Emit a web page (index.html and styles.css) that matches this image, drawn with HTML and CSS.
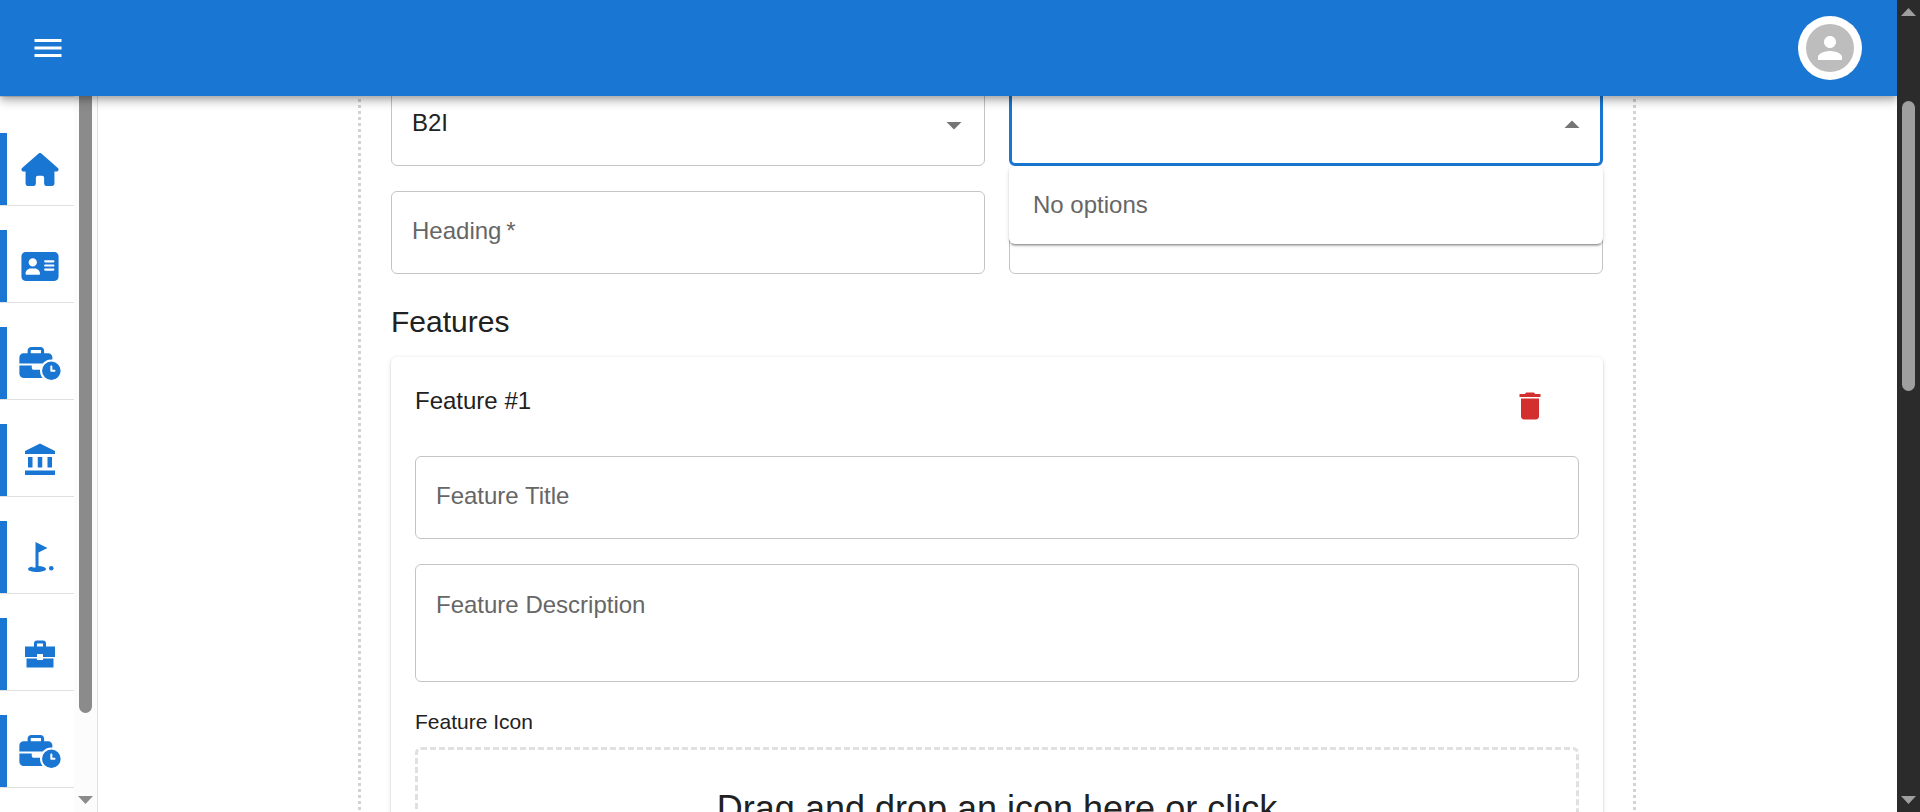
FILE: index.html
```html
<!DOCTYPE html>
<html lang="en">
<head>
<meta charset="utf-8">
<title>Features form</title>
<link rel="stylesheet" href="styles.css">
</head>
<body>
<svg class="defs" aria-hidden="true">
  <symbol id="briefcase-clock" viewBox="0 0 640 512"><path d="M184 48l144 0c4.400 0 8 3.600 8 8l0 40L176 96l0-40c0-4.400 3.600-8 8-8zm-56 8l0 40L64 96C28.700 96 0 124.700 0 160l0 96 192 0 160 0 8.200 0c32.300-39.100 81.100-64 135.800-64c5.400 0 10.700 .2 16 .7l0-32.700c0-35.300-28.700-64-64-64l-64 0 0-40c0-30.900-25.100-56-56-56L184 0c-30.900 0-56 25.100-56 56zM320 352l-96 0c-17.700 0-32-14.300-32-32l0-32L0 288 0 416c0 35.300 28.700 64 64 64l296.200 0C335.100 449.600 320 410.500 320 368c0-5.400 .2-10.700 .7-16l-.7 0zm320 16a144 144 0 1 0 -288 0 144 144 0 1 0 288 0zM496 288c8.800 0 16 7.200 16 16l0 48 32 0c8.800 0 16 7.200 16 16s-7.200 16-16 16l-48 0c-8.800 0-16-7.200-16-16l0-64c0-8.800 7.200-16 16-16z"/></symbol>
</svg>
<div class="window">
  <div class="page">
    <header class="appbar">
      <button class="icon-button" type="button" aria-label="Open menu">
        <svg class="icon" viewBox="0 0 24 24"><path d="M3 18h18v-2H3v2zm0-5h18v-2H3v2zm0-7v2h18V6H3z"/></svg>
      </button>
      <button class="account" type="button" aria-label="Account">
        <span class="avatar"><svg class="icon" viewBox="0 0 24 24"><path d="M12 12c2.210 0 4-1.790 4-4s-1.790-4-4-4-4 1.790-4 4 1.790 4 4 4zm0 2c-2.670 0-8 1.340-8 4v2h16v-2c0-2.660-5.330-4-8-4z"/></svg></span>
      </button>
    </header>
    <div class="body">
      <aside class="sidebar">
        <nav class="nav">
          <a class="nav-item" href="#" aria-label="Home"><svg class="nav-icon medium" viewBox="0 0 576 512"><path d="M575.800 255.500c0 18-15 32.100-32 32.100l-32 0 .7 160.200c0 2.700-.2 5.400-.5 8.100l0 16.200c0 22.100-17.900 40-40 40l-16 0c-1.100 0-2.200 0-3.300-.1c-1.400 .1-2.800 .1-4.200 .1L416 512l-24 0c-22.100 0-40-17.900-40-40l0-24 0-64c0-17.700-14.300-32-32-32l-64 0c-17.700 0-32 14.300-32 32l0 64 0 24c0 22.100-17.900 40-40 40l-24 0-31.900 0c-1.500 0-3-.1-4.500-.2c-1.200 .1-2.400 .2-3.600 .2l-16 0c-22.100 0-40-17.900-40-40l0-112c0-.9 0-1.900 .1-2.800l0-69.700-32 0c-18 0-32-14-32-32.100c0-9 3-17 10-24L266.400 8c7-7 15-8 22-8s15 2 21 7L564.800 231.500c8 7 12 15 11 24z"/></svg></a>
          <a class="nav-item" href="#" aria-label="Profile"><svg class="nav-icon medium" viewBox="0 0 576 512"><path d="M64 32C28.700 32 0 60.700 0 96L0 416c0 35.300 28.700 64 64 64l448 0c35.300 0 64-28.700 64-64l0-320c0-35.300-28.700-64-64-64L64 32zm80 256l64 0c44.200 0 80 35.800 80 80c0 8.800-7.200 16-16 16L80 384c-8.800 0-16-7.200-16-16c0-44.200 35.800-80 80-80zm-32-96a64 64 0 1 1 128 0 64 64 0 1 1 -128 0zm256-32l128 0c8.800 0 16 7.200 16 16s-7.200 16-16 16l-128 0c-8.800 0-16-7.200-16-16s7.200-16 16-16zm0 64l128 0c8.800 0 16 7.200 16 16s-7.200 16-16 16l-128 0c-8.800 0-16-7.200-16-16s7.200-16 16-16zm0 64l128 0c8.800 0 16 7.200 16 16s-7.200 16-16 16l-128 0c-8.800 0-16-7.200-16-16s7.200-16 16-16z"/></svg></a>
          <a class="nav-item" href="#" aria-label="Work history"><svg class="nav-icon wide"><use href="#briefcase-clock"/></svg></a>
          <a class="nav-item" href="#" aria-label="Bank"><svg class="icon" viewBox="0 0 24 24"><path d="M4 10h3v7H4zM10.500 10h3v7h-3zM2 19h20v3H2zM17 10h3v7h-3zM12 1L2 6v2h20V6z"/></svg></a>
          <a class="nav-item" href="#" aria-label="Golf course"><svg class="icon" viewBox="0 0 24 24"><circle cx="19.500" cy="19.500" r="1.500"/><path d="M17 5.920L9 2v17H7v-.73c-1.790.35-3 .99-3 1.730 0 1.100 2.690 2 6 2s6-.9 6-2c0-.99-2.160-1.810-5-1.970V8.980l6-3.060z"/></svg></a>
          <a class="nav-item" href="#" aria-label="Business"><svg class="icon" viewBox="0 0 24 24"><path fill-rule="evenodd" d="M8 7V5a2 2 0 0 1 2-2h4a2 2 0 0 1 2 2v2h6v7h-8v-2h-4v2H2V7zM10 5v2h4V5zM3 15h7v1h4v-1h7v6H3z"/></svg></a>
          <a class="nav-item" href="#" aria-label="Work schedule"><svg class="nav-icon wide"><use href="#briefcase-clock"/></svg></a>
        </nav>
        <div class="scrollbar side-scroll" aria-hidden="true">
          <span class="thumb"></span>
          <svg class="scroll-arrow" viewBox="0 0 15 8"><path d="M0 0h15L7.500 8z"/></svg>
        </div>
      </aside>
      <main class="content">
        <form class="panel">
          <div class="grid">
            <div class="field select-field">
              <input class="input" type="text" value="B2I" aria-label="Business type">
              <svg class="icon arrow" viewBox="0 0 24 24"><path d="M7 10l5 5 5-5z"/></svg>
            </div>
            <div class="field select-field focused">
              <input class="input" type="text" aria-label="Category">
              <svg class="icon arrow" viewBox="0 0 24 24"><path d="M7 14l5-5 5 5z"/></svg>
              <div class="popup">No options</div>
            </div>
            <div class="field"><input class="input" type="text" placeholder="Heading&#8201;*" aria-label="Heading"></div>
            <div class="field"><input class="input" type="text" aria-label="Subheading"></div>
          </div>
          <h2 class="section-title">Features</h2>
          <section class="card">
            <div class="card-head">
              <h3 class="card-title">Feature #1</h3>
              <button class="icon-button delete" type="button" aria-label="Delete feature">
                <svg class="icon" viewBox="0 0 24 24"><path d="M6 19c0 1.100.9 2 2 2h8c1.100 0 2-.9 2-2V7H6v12zM19 4h-3.500l-1-1h-5l-1 1H5v2h14V4z"/></svg>
              </button>
            </div>
            <div class="stack">
              <div class="field"><input class="input" type="text" placeholder="Feature Title" aria-label="Feature Title"></div>
              <div class="field area"><textarea class="input" placeholder="Feature Description" aria-label="Feature Description"></textarea></div>
            </div>
            <p class="caption">Feature Icon</p>
            <button class="dropzone" type="button">Drag and drop an icon here or click</button>
          </section>
        </form>
      </main>
    </div>
  </div>
  <div class="scrollbar page-scroll" aria-hidden="true">
    <svg class="scroll-arrow" viewBox="0 0 15 8"><path d="M0 8h15L7.500 0z"/></svg>
    <span class="track"><span class="thumb"></span></span>
    <svg class="scroll-arrow" viewBox="0 0 15 8"><path d="M0 0h15L7.500 8z"/></svg>
  </div>
</div>
</body>
</html>
```
FILE: styles.css
```css
* { box-sizing: border-box; }

body {
  margin: 0;
  color: #212121;
  background: #fff;
  font-family: "Liberation Sans", Arial, sans-serif;
  font-size: 24px;
  line-height: 36px;
}

button, input, textarea { font: inherit; color: inherit; }
button { padding: 0; border: 0; background: none; cursor: pointer; }
h2, h3, p { margin: 0; font-weight: 400; }

.defs { position: absolute; width: 0; height: 0; }

.window { display: flex; height: 100vh; overflow: hidden; }
.page { flex: 1; min-width: 0; display: flex; flex-direction: column; overflow: hidden; }

.icon { display: block; width: 36px; height: 36px; fill: currentColor; }
.icon-button { display: block; color: inherit; }

/* App bar */
.appbar {
  position: relative;
  z-index: 3;
  flex: none;
  display: flex;
  align-items: center;
  justify-content: space-between;
  height: 96px;
  padding: 0 35px 0 30px;
  color: #fff;
  background: #1976d2;
  box-shadow: 0 3px 6px -1px rgba(0, 0, 0, .2), 0 6px 8px rgba(0, 0, 0, .14), 0 2px 15px rgba(0, 0, 0, .12);
}
.account { padding: 8px; border-radius: 50%; background: #fff; }
.avatar {
  display: flex;
  align-items: center;
  justify-content: center;
  width: 48px;
  height: 48px;
  border-radius: 50%;
  background: #bdbdbd;
}

.body { flex: 1; min-height: 0; display: flex; }

/* Sidebar */
.sidebar { flex: none; display: flex; width: 98px; border-right: 1px solid #e0e0e0; }
.nav {
  flex: 1;
  display: flex;
  flex-direction: column;
  gap: 24px;
  padding-top: 36px;
  border-top: 1px solid #e0e0e0;
  overflow: hidden;
}
.nav-item {
  flex: none;
  display: flex;
  align-items: center;
  justify-content: center;
  height: 73px;
  padding-left: 6px;
  border-bottom: 1px solid #e0e0e0;
  color: #1976d2;
  background: linear-gradient(#1976d2, #1976d2) left / 7px 100% no-repeat;
  background-clip: padding-box;
}
.nav-icon { display: block; fill: currentColor; height: 33px; }
.medium { width: 38px; }
.wide { width: 42px; }

/* Scrollbars */
.scrollbar { flex: none; display: flex; flex-direction: column; align-items: center; width: 23px; padding: 8px 0; }
.thumb { display: block; width: 13px; border-radius: 7px; background: currentColor; }
.scroll-arrow { display: block; flex: none; width: 15px; height: 8px; fill: currentColor; }
.side-scroll { justify-content: space-between; padding-top: 0; color: #8b8b8b; background: #fcfcfc; }
.side-scroll .thumb { height: calc(100% - 91px); border-radius: 0 0 7px 7px; }
.page-scroll { color: #9f9f9f; background: #2b2b2b; }
.track { flex: 1; padding-top: 85px; }
.page-scroll .thumb { height: 290px; }

/* Form */
.content {
  flex: 1;
  min-width: 0;
  display: flex;
  justify-content: center;
  align-items: flex-start;
  padding-right: 1px;
  overflow: hidden;
}
.panel {
  width: 100%;
  max-width: 1278px;
  margin-top: -16px;
  padding: 3px 30px 30px;
  border: 3px dotted #d3d3d3;
  border-top: 0;
}
.grid { display: grid; grid-template-columns: 1fr 1fr; gap: 25px 24px; }
.field {
  position: relative;
  display: flex;
  align-items: center;
  height: 83px;
  border: 1px solid #c4c4c4;
  border-radius: 6px;
}
.input {
  flex: 1;
  min-width: 0;
  padding: 0 20px 3px;
  border: 0;
  outline: 0;
  background: none;
}
.input::placeholder { color: #666; opacity: 1; }
.select-field { padding-right: 12px; }
.arrow { color: #757575; }
.focused { border: 3px solid #1976d2; padding-right: 10px; }
.popup {
  position: absolute;
  z-index: 2;
  top: calc(100% + 3px);
  left: -3px;
  right: -3px;
  padding: 21px 24px;
  border-radius: 6px;
  color: #666;
  background: #fff;
  box-shadow: 0 3px 2px -2px rgba(0, 0, 0, .3), 0 2px 2px rgba(0, 0, 0, .14), 0 1px 5px rgba(0, 0, 0, .12);
}
.section-title { padding: 24px 0 11px; font-size: 30px; line-height: 48px; }
.card {
  padding: 24px 24px 36px;
  border-radius: 6px;
  box-shadow: 0 3px 2px -2px rgba(0, 0, 0, .2), 0 1px 2px rgba(0, 0, 0, .14), 0 1px 5px rgba(0, 0, 0, .12);
}
.card-head { display: flex; justify-content: space-between; align-items: flex-start; height: 75px; padding-top: 2px; }
.card-title { font-size: 24px; line-height: 36px; }
.delete { margin: 5px 31px 0 0; color: #d32f2f; }
.stack { display: grid; gap: 25px; }
.area { height: 118px; align-items: stretch; padding: 22px 0; }
.area .input { resize: none; overflow: hidden; line-height: 36px; }
.caption { padding: 24px 0 9px; font-size: 21px; line-height: 32px; }
.dropzone {
  display: flex;
  align-items: flex-start;
  justify-content: center;
  width: 100%;
  height: 240px;
  padding: 35px;
  border: 3px dashed #e0e0e0;
  border-radius: 6px;
  font-size: 36px;
  line-height: 48px;
}
```
